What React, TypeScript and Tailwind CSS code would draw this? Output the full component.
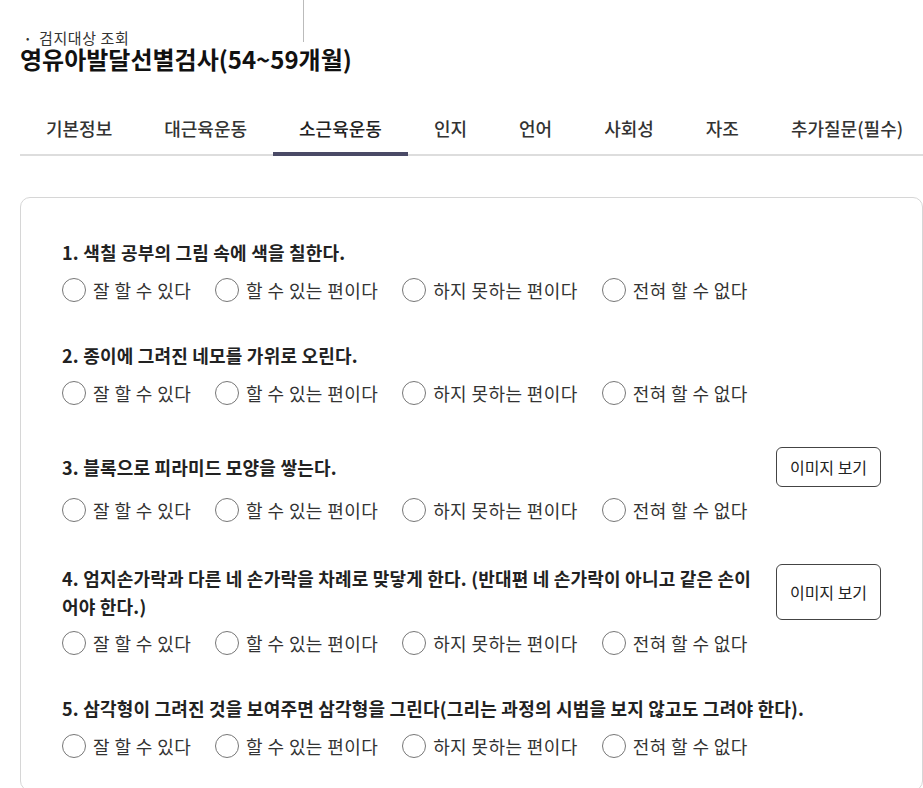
import React from 'react'

type Question = {
  no: number
  text: string
  image?: boolean
}

const tabs = ['기본정보', '대근육운동', '소근육운동', '인지', '언어', '사회성', '자조', '추가질문(필수)']

const options = ['잘 할 수 있다', '할 수 있는 편이다', '하지 못하는 편이다', '전혀 할 수 없다']

const questions: Question[] = [
  { no: 1, text: '색칠 공부의 그림 속에 색을 칠한다.' },
  { no: 2, text: '종이에 그려진 네모를 가위로 오린다.' },
  { no: 3, text: '블록으로 피라미드 모양을 쌓는다.', image: true },
  { no: 4, text: '엄지손가락과 다른 네 손가락을 차례로 맞닿게 한다. (반대편 네 손가락이 아니고 같은 손이어야 한다.)', image: true },
  { no: 5, text: '삼각형이 그려진 것을 보여주면 삼각형을 그린다(그리는 과정의 시범을 보지 않고도 그려야 한다).' },
]

const QuestionItem = ({ q }: { q: Question }) => {
  return (
    <div className={q.image ? 'mt-[3px] flex flex-col gap-[9px]' : 'flex flex-col gap-[10px]'}>
      <div className="flex items-stretch gap-[18px]">
        <div className="flex flex-1 items-center text-[18px] font-bold leading-[28px] tracking-[0.2px] text-[#222]">
          {q.no}. {q.text}
        </div>
        {q.image && (
          <button className="min-h-[40px] w-[105px] shrink-0 rounded-[6px] border border-[#444] bg-white text-[16px] text-[#222]">
            이미지 보기
          </button>
        )}
      </div>
      <div className="flex items-center gap-[24px]">
        {options.map((o) => (
          <label key={o} className="flex items-center gap-[7px] text-[18px] leading-[28px] tracking-[0.4px] text-[#333]">
            <span className="h-[24px] w-[24px] rounded-full border border-[#777] bg-white" />
            {o}
          </label>
        ))}
      </div>
    </div>
  )
}

export default function App() {
  return (
    <div className="relative min-h-screen overflow-hidden bg-white pl-[20px] font-['Noto_Sans_CJK_KR',sans-serif] text-[#222]">
      <div className="absolute left-[303px] top-0 h-[42px] w-px bg-[#bbb]" />
      <div className="pt-[30px]">
        <div className="flex items-center gap-[9px] pl-[6px] text-[15px] leading-[15px] tracking-[0.6px] text-[#333]">
          <span className="text-[10px]">•</span>
          <span>검지대상 조회</span>
        </div>
        <h1 className="text-[24px] font-bold leading-[28px] text-[#111]">영유아발달선별검사(54~59개월)</h1>
      </div>

      <div className="mt-[33px] flex border-b-2 border-[#ddd]">
        {tabs.map((t) => (
          <div
            key={t}
            className={
              t === '소근육운동'
                ? 'relative -mb-[2px] shrink-0 whitespace-nowrap border-b-4 border-[#4a4a66] px-[26px] pb-[10px] pt-[8px] text-[18px] font-medium leading-[28px] text-[#222]'
                : 'shrink-0 whitespace-nowrap px-[26px] pb-[12px] pt-[8px] text-[18px] font-medium leading-[28px] text-[#333]'
            }
          >
            {t}
          </div>
        ))}
      </div>

      <div className="mt-[41px] rounded-[10px] border border-[#d6d6d6] px-[41px] pb-[30px] pt-[40px]">
        <div className="flex flex-col gap-[37px]">
          {questions.map((q) => (
            <QuestionItem key={q.no} q={q} />
          ))}
        </div>
      </div>
    </div>
  )
}
